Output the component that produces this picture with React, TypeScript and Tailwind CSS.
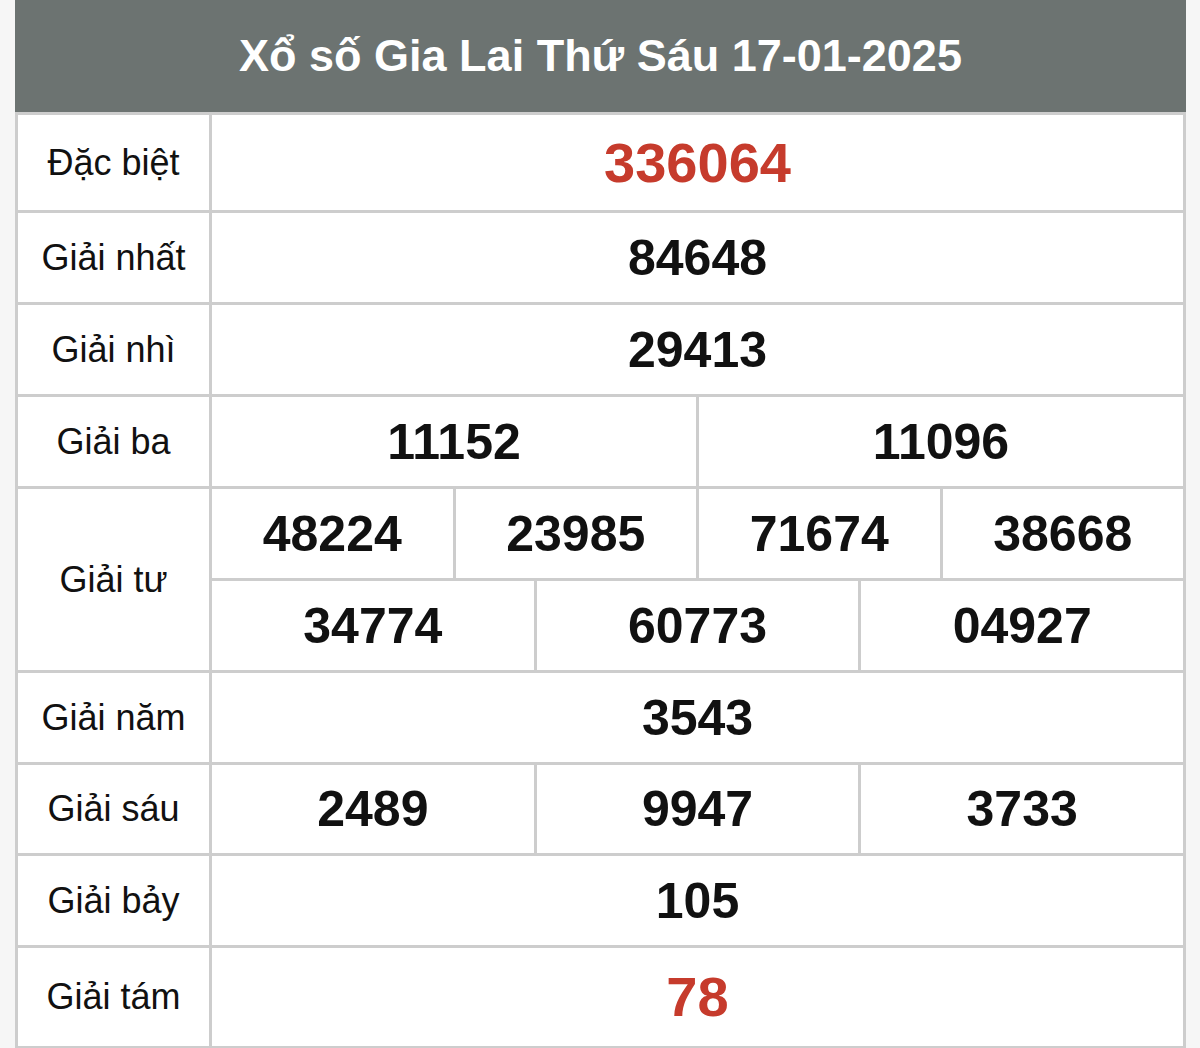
const rows: { label: string; nums: string[][]; red?: boolean; h: string }[] = [
  { label: 'Đặc biệt', nums: [['336064']], red: true, h: 'h-[95px]' },
  { label: 'Giải nhất', nums: [['84648']], h: 'h-[89px]' },
  { label: 'Giải nhì', nums: [['29413']], h: 'h-[89px]' },
  { label: 'Giải ba', nums: [['11152', '11096']], h: 'h-[89px]' },
  {
    label: 'Giải tư',
    nums: [
      ['48224', '23985', '71674', '38668'],
      ['34774', '60773', '04927'],
    ],
    h: 'h-[89px]',
  },
  { label: 'Giải năm', nums: [['3543']], h: 'h-[89px]' },
  { label: 'Giải sáu', nums: [['2489', '9947', '3733']], h: 'h-[88px]' },
  { label: 'Giải bảy', nums: [['105']], h: 'h-[89px]' },
  { label: 'Giải tám', nums: [['78']], red: true, h: 'h-[98px]' },
];

export default function App() {
  return (
    <div className="min-h-screen bg-[#f6f6f6] font-['Liberation_Sans',Arial,sans-serif]">
      <div className="ml-[15px] w-[1171px]">
        <div className="flex h-[112px] items-center justify-center bg-[#6c7371] pb-[2px]">
          <h1 className="text-[45px] font-bold leading-none text-white">
            Xổ số Gia Lai Thứ Sáu 17-01-2025
          </h1>
        </div>
        <div className="flex flex-col gap-[3px] bg-[#cdcdcd] p-[3px]">
          {rows.map((r) => (
            <div key={r.label} className="flex gap-[3px]">
              <div className="flex w-[191px] shrink-0 items-center justify-center bg-white text-[36px] text-[#111]">
                {r.label}
              </div>
              <div className="flex flex-1 flex-col gap-[3px]">
                {r.nums.map((line, i) => (
                  <div key={i} className={`flex gap-[3px] ${r.h}`}>
                    {line.map((n) => (
                      <div
                        key={n}
                        className={`flex flex-1 items-center justify-center bg-white font-bold leading-none ${
                          r.red ? 'text-[56px] text-[#c63b2c]' : 'text-[50px] text-[#111]'
                        }`}
                      >
                        {n}
                      </div>
                    ))}
                  </div>
                ))}
              </div>
            </div>
          ))}
        </div>
      </div>
    </div>
  );
}
